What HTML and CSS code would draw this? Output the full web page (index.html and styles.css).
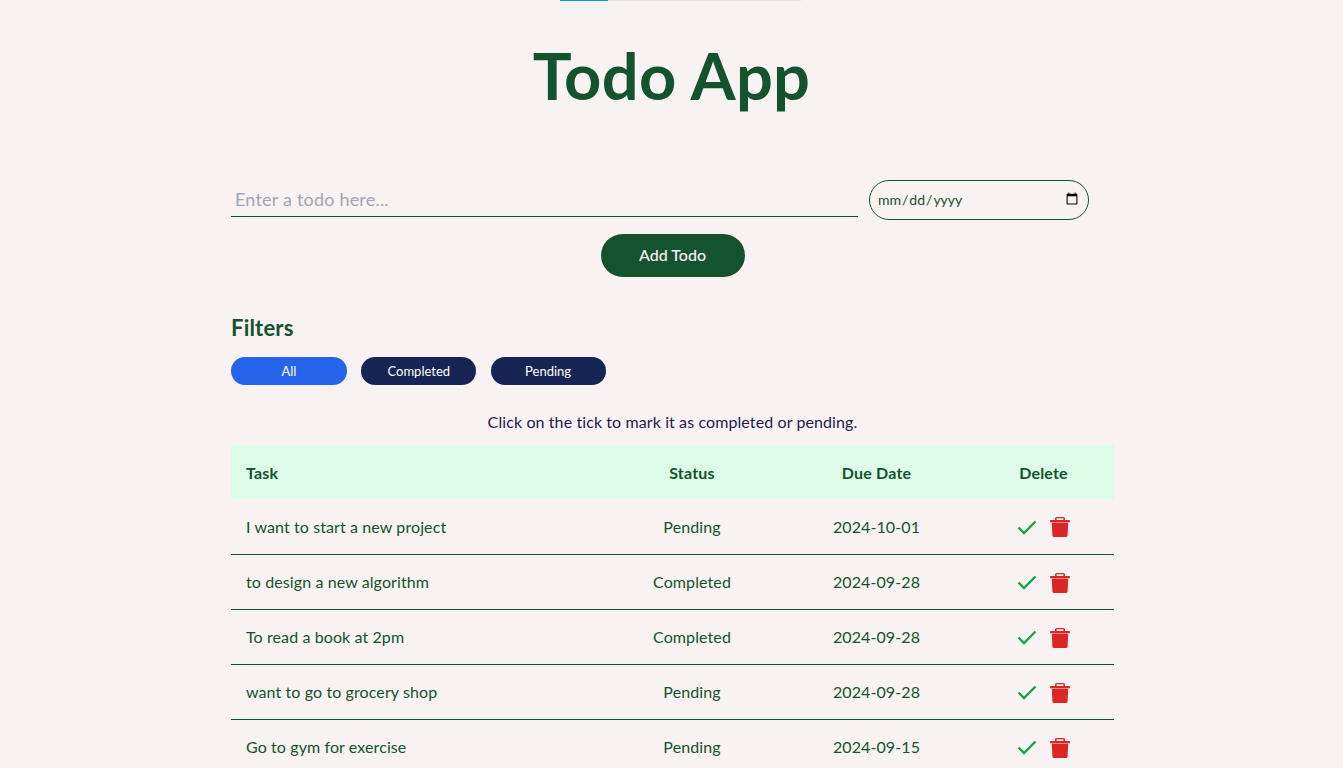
FILE: index.html
```html
<!DOCTYPE html>
<html lang="en">
<head>
    <meta charset="UTF-8">
    <meta name="viewport" content="width=device-width, initial-scale=1.0">
    <title>Todo App</title>
    <link rel="stylesheet" href="styles.css">
</head>
<body>
    <div class="progress"><div class="progress-fill"></div></div>

    <h1 class="title">Todo App</h1>

    <main class="container">
        <div class="form-row">
            <input class="todo-input" type="text" placeholder="Enter a todo here...">
            <input class="date-input" type="date">
        </div>
        <div class="add-row">
            <button class="add-btn">Add Todo</button>
        </div>

        <h2 class="filters-title">Filters</h2>
        <div class="filters">
            <button class="filter-btn active">All</button>
            <button class="filter-btn">Completed</button>
            <button class="filter-btn">Pending</button>
        </div>

        <p class="hint">Click on the tick to mark it as completed or pending.</p>

        <table class="todo-table">
            <thead>
                <tr>
                    <th class="col-task">Task</th>
                    <th class="col-status">Status</th>
                    <th class="col-date">Due Date</th>
                    <th class="col-delete">Delete</th>
                </tr>
            </thead>
            <tbody>
                <tr>
                    <td class="col-task">I want to start a new project</td>
                    <td>Pending</td>
                    <td>2024-10-01</td>
                    <td><div class="actions">
                        <svg class="icon-tick" viewBox="2 5 20 15"><path d="M3.500 12.500l5.500 5.500L20.500 6.500"/></svg>
                        <svg class="icon-trash" viewBox="0 0 20 20"><path d="M6.500 0h7A1.500 1.500 0 0 1 15 1.500V3h4.200a.8.8 0 0 1 .8.8V5.200H0V3.800A.8.8 0 0 1 .8 3H5V1.500A1.500 1.500 0 0 1 6.500 0zm.1 1.200V3h6.800V1.200zM1.800 5.700h16.400l-.6 12.800A1.600 1.600 0 0 1 16 20H4a1.600 1.600 0 0 1-1.600-1.500z"/></svg>
                    </div></td>
                </tr>
                <tr>
                    <td class="col-task">to design a new algorithm</td>
                    <td>Completed</td>
                    <td>2024-09-28</td>
                    <td><div class="actions">
                        <svg class="icon-tick" viewBox="2 5 20 15"><path d="M3.500 12.500l5.500 5.500L20.500 6.500"/></svg>
                        <svg class="icon-trash" viewBox="0 0 20 20"><path d="M6.500 0h7A1.500 1.500 0 0 1 15 1.500V3h4.200a.8.8 0 0 1 .8.8V5.200H0V3.800A.8.8 0 0 1 .8 3H5V1.500A1.500 1.500 0 0 1 6.500 0zm.1 1.200V3h6.800V1.200zM1.800 5.700h16.400l-.6 12.800A1.600 1.600 0 0 1 16 20H4a1.600 1.600 0 0 1-1.600-1.500z"/></svg>
                    </div></td>
                </tr>
                <tr>
                    <td class="col-task">To read a book at 2pm</td>
                    <td>Completed</td>
                    <td>2024-09-28</td>
                    <td><div class="actions">
                        <svg class="icon-tick" viewBox="2 5 20 15"><path d="M3.500 12.500l5.500 5.500L20.500 6.500"/></svg>
                        <svg class="icon-trash" viewBox="0 0 20 20"><path d="M6.500 0h7A1.500 1.500 0 0 1 15 1.500V3h4.200a.8.8 0 0 1 .8.8V5.200H0V3.800A.8.8 0 0 1 .8 3H5V1.500A1.500 1.500 0 0 1 6.500 0zm.1 1.200V3h6.800V1.200zM1.800 5.700h16.400l-.6 12.800A1.600 1.600 0 0 1 16 20H4a1.600 1.600 0 0 1-1.600-1.500z"/></svg>
                    </div></td>
                </tr>
                <tr>
                    <td class="col-task">want to go to grocery shop</td>
                    <td>Pending</td>
                    <td>2024-09-28</td>
                    <td><div class="actions">
                        <svg class="icon-tick" viewBox="2 5 20 15"><path d="M3.500 12.500l5.500 5.500L20.500 6.500"/></svg>
                        <svg class="icon-trash" viewBox="0 0 20 20"><path d="M6.500 0h7A1.500 1.500 0 0 1 15 1.500V3h4.200a.8.8 0 0 1 .8.8V5.200H0V3.800A.8.8 0 0 1 .8 3H5V1.500A1.500 1.500 0 0 1 6.500 0zm.1 1.200V3h6.800V1.200zM1.800 5.700h16.400l-.6 12.800A1.600 1.600 0 0 1 16 20H4a1.600 1.600 0 0 1-1.600-1.500z"/></svg>
                    </div></td>
                </tr>
                <tr>
                    <td class="col-task">Go to gym for exercise</td>
                    <td>Pending</td>
                    <td>2024-09-15</td>
                    <td><div class="actions">
                        <svg class="icon-tick" viewBox="2 5 20 15"><path d="M3.500 12.500l5.500 5.500L20.500 6.500"/></svg>
                        <svg class="icon-trash" viewBox="0 0 20 20"><path d="M6.500 0h7A1.500 1.500 0 0 1 15 1.500V3h4.200a.8.8 0 0 1 .8.8V5.200H0V3.800A.8.8 0 0 1 .8 3H5V1.500A1.500 1.500 0 0 1 6.500 0zm.1 1.200V3h6.800V1.200zM1.800 5.700h16.400l-.6 12.800A1.600 1.600 0 0 1 16 20H4a1.600 1.600 0 0 1-1.600-1.500z"/></svg>
                    </div></td>
                </tr>
            </tbody>
        </table>
    </main>
</body>
</html>
```

FILE: styles.css
```css
* {
    box-sizing: border-box;
    margin: 0;
    padding: 0;
}

html {
    overflow: hidden;
}

body {
    height: 768px;
    overflow: hidden;
    background: #f8f2f2;
    color: #14532d;
    font-family: 'Lato', 'Noto Sans', sans-serif;
    letter-spacing: 0.1px;
}

/* thin bar at the very top */
.progress {
    width: 241px;
    height: 1px;
    margin-left: 560px;
    background: #e5e5e5;
}

.progress-fill {
    width: 48px;
    height: 1px;
    background: #06a3b7;
}

.title {
    margin-top: 34px;
    font-size: 65px;
    line-height: 80px;
    font-weight: 700;
    letter-spacing: 0.3px;
    text-align: center;
}

.container {
    width: 883px;
    margin: 65px 0 0 231px;
}

.form-row {
    display: flex;
    align-items: flex-end;
    gap: 11px;
}

.todo-input {
    width: 627px;
    height: 36px;
    padding: 0 4px;
    border: none;
    border-bottom: 1px solid #14532d;
    background: transparent;
    color: #14532d;
    font-family: inherit;
    font-size: 18px;
    letter-spacing: 0.2px;
    outline: none;
}

.todo-input::placeholder {
    color: #a3a3b3;
}

.date-input {
    width: 220px;
    height: 40px;
    margin-bottom: -3px;
    padding: 0 7px 2px 7px;
    border: 1px solid #14532d;
    border-radius: 20px;
    background: transparent;
    color: #14532d;
    font-family: inherit;
    font-size: 14px;
}

.add-row {
    display: flex;
    justify-content: center;
    margin-top: 17px;
}

.add-btn {
    width: 144px;
    height: 43px;
    padding-bottom: 2px;
    border: none;
    border-radius: 22px;
    background: #14532d;
    color: #f8f2f2;
    font-family: inherit;
    font-size: 16px;
    font-weight: 500;
}

.filters-title {
    margin-top: 37px;
    font-size: 22px;
    line-height: 28px;
    font-weight: 700;
    letter-spacing: 0.2px;
}

.filters {
    display: flex;
    gap: 14.3px;
    margin-top: 15px;
}

.filter-btn {
    width: 115px;
    height: 28px;
    border: none;
    border-radius: 14px;
    background: #172554;
    color: #fff;
    font-family: inherit;
    font-size: 13px;
}

.filter-btn.active {
    width: 116px;
    background: #2563eb;
}

.hint {
    margin-top: 27px;
    color: #1e1b4b;
    font-size: 16px;
    line-height: 20px;
    text-align: center;
}

.todo-table {
    width: 100%;
    margin-top: 13px;
    border-collapse: collapse;
    table-layout: fixed;
    font-size: 16px;
}

.todo-table th {
    height: 54px;
    background: #dcfce7;
    font-weight: 700;
    letter-spacing: 0.2px;
}

.todo-table td {
    height: 55px;
    border-bottom: 1px solid #14532d;
    text-align: center;
}

.todo-table .col-task {
    padding-left: 15px;
    text-align: left;
}

.col-task {
    width: 373px;
}

.col-status {
    width: 176px;
}

.col-date {
    width: 193px;
}

.actions {
    display: flex;
    justify-content: center;
    align-items: center;
    gap: 13px;
    padding-top: 2px;
}

.icon-tick {
    width: 20px;
    height: 15px;
    fill: none;
    stroke: #16a34a;
    stroke-width: 2.4;
}

.icon-trash {
    width: 20px;
    height: 20px;
    fill: #dc2626;
    fill-rule: evenodd;
}
```
